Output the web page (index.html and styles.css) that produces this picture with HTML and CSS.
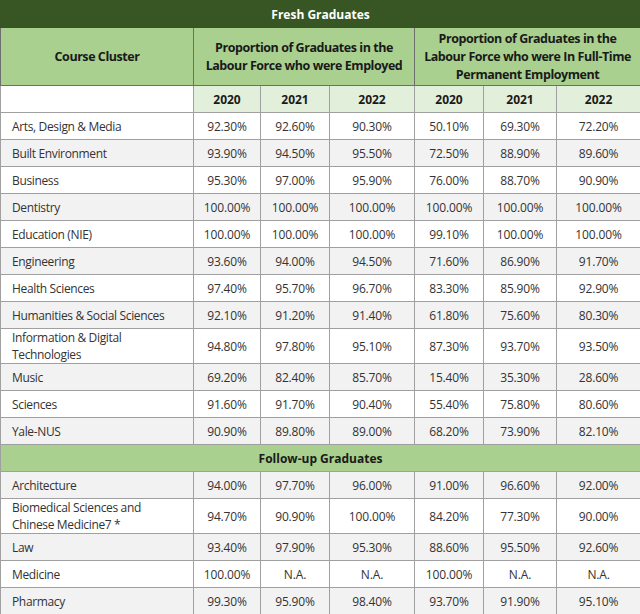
FILE: index.html
```html
<!DOCTYPE html>
<html lang="en">
<head>
<meta charset="utf-8">
<title>Graduate Employment</title>
<link rel="stylesheet" href="styles.css">
</head>
<body>
<table class="grid">
  <colgroup>
    <col class="c-name"><col class="c1"><col class="c2"><col class="c3"><col class="c4"><col class="c5"><col class="c6">
  </colgroup>
  <thead>
    <tr class="title"><th colspan="7">Fresh Graduates</th></tr>
    <tr class="head">
      <th>Course Cluster</th>
      <th colspan="3">Proportion of Graduates in the Labour Force who were Employed</th>
      <th colspan="3">Proportion of Graduates in the Labour Force who were In Full-Time Permanent Employment</th>
    </tr>
    <tr class="years">
      <th class="blank"></th>
      <th>2020</th><th>2021</th><th>2022</th><th>2020</th><th>2021</th><th>2022</th>
    </tr>
  </thead>
  <tbody>
    <tr><td>Arts, Design &amp; Media</td><td>92.30%</td><td>92.60%</td><td>90.30%</td><td>50.10%</td><td>69.30%</td><td>72.20%</td></tr>
    <tr><td>Built Environment</td><td>93.90%</td><td>94.50%</td><td>95.50%</td><td>72.50%</td><td>88.90%</td><td>89.60%</td></tr>
    <tr><td>Business</td><td>95.30%</td><td>97.00%</td><td>95.90%</td><td>76.00%</td><td>88.70%</td><td>90.90%</td></tr>
    <tr><td>Dentistry</td><td>100.00%</td><td>100.00%</td><td>100.00%</td><td>100.00%</td><td>100.00%</td><td>100.00%</td></tr>
    <tr><td>Education (NIE)</td><td>100.00%</td><td>100.00%</td><td>100.00%</td><td>99.10%</td><td>100.00%</td><td>100.00%</td></tr>
    <tr><td>Engineering</td><td>93.60%</td><td>94.00%</td><td>94.50%</td><td>71.60%</td><td>86.90%</td><td>91.70%</td></tr>
    <tr><td>Health Sciences</td><td>97.40%</td><td>95.70%</td><td>96.70%</td><td>83.30%</td><td>85.90%</td><td>92.90%</td></tr>
    <tr><td>Humanities &amp; Social Sciences</td><td>92.10%</td><td>91.20%</td><td>91.40%</td><td>61.80%</td><td>75.60%</td><td>80.30%</td></tr>
    <tr class="tall"><td>Information &amp; Digital Technologies</td><td>94.80%</td><td>97.80%</td><td>95.10%</td><td>87.30%</td><td>93.70%</td><td>93.50%</td></tr>
    <tr><td>Music</td><td>69.20%</td><td>82.40%</td><td>85.70%</td><td>15.40%</td><td>35.30%</td><td>28.60%</td></tr>
    <tr><td>Sciences</td><td>91.60%</td><td>91.70%</td><td>90.40%</td><td>55.40%</td><td>75.80%</td><td>80.60%</td></tr>
    <tr><td>Yale-NUS</td><td>90.90%</td><td>89.80%</td><td>89.00%</td><td>68.20%</td><td>73.90%</td><td>82.10%</td></tr>
  </tbody>
  <tbody>
    <tr class="section"><th colspan="7">Follow-up Graduates</th></tr>
    <tr><td>Architecture</td><td>94.00%</td><td>97.70%</td><td>96.00%</td><td>91.00%</td><td>96.60%</td><td>92.00%</td></tr>
    <tr class="tall"><td>Biomedical Sciences and Chinese Medicine7 *</td><td>94.70%</td><td>90.90%</td><td>100.00%</td><td>84.20%</td><td>77.30%</td><td>90.00%</td></tr>
    <tr><td>Law</td><td>93.40%</td><td>97.90%</td><td>95.30%</td><td>88.60%</td><td>95.50%</td><td>92.60%</td></tr>
    <tr><td>Medicine</td><td>100.00%</td><td>N.A.</td><td>N.A.</td><td>100.00%</td><td>N.A.</td><td>N.A.</td></tr>
    <tr><td>Pharmacy</td><td>99.30%</td><td>95.90%</td><td>98.40%</td><td>93.70%</td><td>91.90%</td><td>95.10%</td></tr>
  </tbody>
</table>
</body>
</html>
```
FILE: styles.css
```css
html, body {
  margin: 0;
  padding: 0;
  background: #ffffff;
}
body {
  font-family: "Open Sans", "Noto Sans", sans-serif;
  font-size: 12px;
  color: #333333;
}
.grid {
  width: 640px;
  table-layout: fixed;
  border-collapse: collapse;
}
.c-name { width: 193px; }
.c1 { width: 67px; }
.c2 { width: 69px; }
.c3 { width: 85px; }
.c4 { width: 69px; }
.c5 { width: 73px; }
.c6 { width: 84px; }

.grid th, .grid td {
  border: 1px solid #a0a0a0;
  padding: 0 4px;
  text-align: center;
  vertical-align: middle;
}
.grid td {
  letter-spacing: -0.15px;
}
.grid td:first-child {
  text-align: left;
  padding-left: 11px;
  padding-right: 14px;
  line-height: 17px;
  letter-spacing: -0.35px;
}
.grid td:nth-child(2), .grid td:nth-child(3),
.grid th:nth-child(2) {
  border-left-color: #444444;
}
.grid tbody tr {
  height: 27px;
}
.grid tbody tr.tall {
  height: 34px;
}
.grid tbody tr:nth-child(even) td {
  background: #f2f2f2;
}
.title th {
  height: 26px;
  background: #375623;
  color: #ffffff;
  font-weight: 700;
  font-size: 12px;
  border-color: #375623;
}
.head th {
  height: 57px;
  background: #a9d08e;
  color: #1a1a1a;
  font-weight: 700;
  font-size: 12.5px;
  letter-spacing: -0.45px;
  line-height: 18px;
  padding: 0 3px;
  border-color: #6e6e6e;
}
.years th {
  height: 26px;
  background: #e2efda;
  color: #1a1a1a;
  font-weight: 700;
}
.years th.blank {
  background: #ffffff;
}
.section th {
  height: 26px;
  background: #a9d08e;
  color: #1a1a1a;
  font-weight: 700;
}
```
